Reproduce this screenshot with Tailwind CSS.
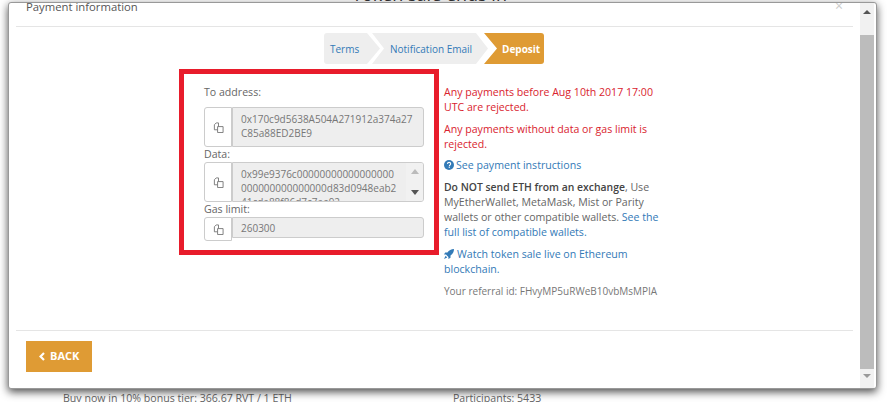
<!DOCTYPE html>
<html lang="en">
  <head>
    <meta charset="UTF-8" />
    <title>Payment information</title>
    <script src="https://cdn.jsdelivr.net/npm/@tailwindcss/browser@4"></script>
  </head>
  <body class="relative h-[402px] w-[887px] overflow-hidden bg-white font-['Open_Sans',sans-serif] text-[#666]">
    <!-- page behind the modal -->
    <div class="absolute left-[352px] top-[-18px] text-[18px] leading-[24px] text-[#333]">Token sale ends in</div>
    <div class="absolute left-[63px] top-[391px] text-[10.6px] leading-[15px] text-[#666]">Buy now in 10% bonus tier: 366.67 RVT / 1 ETH</div>
    <div class="absolute left-[453px] top-[391px] text-[10.6px] leading-[15px] text-[#666]">Participants: 5433</div>

    <!-- modal -->
    <div class="absolute left-[8px] top-[2px] flex h-[387px] w-[869px] rounded-[3px] border border-[#999] bg-white shadow-[0_3px_9px_rgba(0,0,0,0.7)]">
      <div class="flex w-[851px] flex-col overflow-hidden pl-[7px] pr-[6px]">
        <div class="relative h-[24px] shrink-0 border-b border-[#e5e5e5]">
          <h4 class="ml-[10px] mt-[-4px] text-[11.3px] leading-[15px] text-[#555]">Payment information</h4>
          <span class="absolute right-[10px] top-[-4px] text-[14px] leading-[14px] text-[#ccc]">×</span>
        </div>

        <!-- steps -->
        <div class="mt-[6px] flex h-[31px] shrink-0 pl-[308px] text-[10px] leading-[33px]">
          <div class="h-full w-[56px] rounded-l-[3px] bg-[#eee] pl-[6px] text-[#337ab7] [clip-path:polygon(0_0,43px_0,56px_50%,43px_100%,0_100%)]">Terms</div>
          <div class="ml-[-8px] h-full w-[116px] bg-[#eee] pl-[18px] text-[#337ab7] [clip-path:polygon(0_0,104px_0,116px_50%,104px_100%,0_100%,12px_50%)]">Notification Email</div>
          <div class="ml-[-4px] h-full w-[60px] rounded-r-[3px] bg-[#df9b34] pl-[18px] font-bold text-white [clip-path:polygon(0_0,100%_0,100%_100%,0_100%,13px_50%)]">Deposit</div>
        </div>

        <!-- body -->
        <div class="mt-[5px] flex h-[261px] shrink-0 items-start pl-[163px]">
          <div class="h-[186px] w-[260px] shrink-0 border-[5px] border-[#e81c2b] pl-[20px] pr-[10px] pt-[11px] text-[10.6px] text-[#666]">
            <div class="h-[15px] leading-[15px]">To address:</div>
            <div class="mt-[7px] flex h-[40px]">
              <div class="flex w-[28px] shrink-0 items-center justify-center rounded-l-[3px] border border-[#ccc] bg-white">
                <svg class="h-[11px] w-[11px]" viewBox="0 0 12 12" fill="none" stroke="#777" stroke-width="1"><path d="M5 5v6.500h6V5zM5 8.500H1.500V3l2-2h2.500v4"/></svg>
              </div>
              <div class="flex-1 rounded-r-[3px] border border-[#ccc] bg-[#eee] pb-[3px] pl-[8px] pr-[6px] pt-[4px] text-[10px] leading-[14px] text-[#777]">0x170c9d5638A504A271912a374a27<br />C85a88ED2BE9</div>
            </div>
            <div class="h-[15px] leading-[15px]">Data:</div>
            <div class="flex h-[40px]">
              <div class="flex w-[28px] shrink-0 items-center justify-center rounded-l-[3px] border border-[#ccc] bg-white">
                <svg class="h-[11px] w-[11px]" viewBox="0 0 12 12" fill="none" stroke="#777" stroke-width="1"><path d="M5 5v6.500h6V5zM5 8.500H1.500V3l2-2h2.500v4"/></svg>
              </div>
              <div class="flex min-w-0 flex-1 overflow-hidden rounded-r-[3px] border border-[#ccc] bg-[#eee]">
                <div class="flex-1 overflow-hidden pb-[3px] pl-[8px] pt-[4px] text-[10px] leading-[14px] text-[#777]">0x99e9376c00000000000000000<br />000000000000000d83d0948eab2<br />41cda88f86d7c7ae92</div>
                <div class="flex w-[17px] shrink-0 flex-col items-center justify-between bg-[#f1f1f1] pb-[6px] pt-[6px]">
                  <span class="h-0 w-0 border-x-[4px] border-b-[5px] border-x-transparent border-b-[#bbb]"></span>
                  <span class="h-0 w-0 border-x-[4px] border-t-[5px] border-x-transparent border-t-[#555]"></span>
                </div>
              </div>
            </div>
            <div class="h-[15px] leading-[15px]">Gas limit:</div>
            <div class="flex items-start">
              <div class="flex h-[24px] w-[28px] shrink-0 items-center justify-center rounded-l-[3px] border border-[#ccc] bg-white">
                <svg class="h-[11px] w-[11px]" viewBox="0 0 12 12" fill="none" stroke="#777" stroke-width="1"><path d="M5 5v6.500h6V5zM5 8.500H1.500V3l2-2h2.500v4"/></svg>
              </div>
              <div class="h-[21px] flex-1 rounded-r-[3px] border border-[#ccc] bg-[#eee] pl-[8px] text-[10px] leading-[20px] text-[#777]">260300</div>
            </div>
          </div>

          <div class="ml-[5px] w-[222px] pt-[16px] text-[10.6px] leading-[15px]">
            <p class="mb-[7px] text-[#d9232e]">Any payments before Aug 10th 2017 17:00 UTC are rejected.</p>
            <p class="mb-[6px] text-[#d9232e]">Any payments without data or gas limit is rejected.</p>
            <p class="mb-[7px] text-[#337ab7]"><svg class="mr-[2px] inline h-[10px] w-[10px] align-[-1px]" viewBox="0 0 10 10"><circle cx="5" cy="5" r="5" fill="#337ab7"/><path d="M3.400 3.900C3.500 2.900 4.200 2.400 5.100 2.400c1 0 1.600.6 1.600 1.400 0 1.200-1.300 1.200-1.300 2.100" fill="none" stroke="#fff" stroke-width="1.100"/><rect x="4.700" y="6.600" width="1.200" height="1.200" fill="#fff"/></svg>See payment instructions</p>
            <p class="mb-[7px]"><b class="text-[10.4px] font-semibold text-[#444]">Do NOT send ETH from an exchange</b>, Use MyEtherWallet, MetaMask, Mist or Parity wallets or other compatible wallets. <span class="text-[#337ab7]">See the full list of compatible wallets.</span></p>
            <p class="mb-[7px] text-[#337ab7]"><svg class="mr-[3px] inline h-[10px] w-[10px] align-[-1px]" viewBox="0 0 10 10" fill="#337ab7"><path d="M10 0C7.200 0 5 1.200 3.400 3.500H1.200L0 5.600h2L4.400 8v2l2.100-1.200V6.600C8.800 5 10 2.800 10 0z"/><path d="M1.600 6.800 0 10l3.200-1.600z"/></svg>Watch token sale live on Ethereum blockchain.</p>
            <p class="text-[10px] text-[#777]">Your referral id: FHvyMP5uRWeB10vbMsMPIA</p>
          </div>
        </div>

        <!-- footer -->
        <div class="shrink-0 border-t border-[#e5e5e5] pl-[10px] pt-[10px]">
          <div class="flex h-[31px] w-[66px] items-center gap-[5px] bg-[#df9b34] pl-[13px] text-[11px] font-bold text-white">
            <svg class="h-[9px] w-[6px]" viewBox="0 0 6 9" fill="none" stroke="#fff" stroke-width="2.200"><path d="M5 1 1.500 4.500 5 8"/></svg>
            BACK
          </div>
        </div>
      </div>

      <!-- modal scrollbar -->
      <div class="ml-[1px] mr-[2px] flex w-[14px] flex-col items-center bg-[#f1f1f1]">
        <div class="flex h-[32px] w-full shrink-0 justify-center pt-[7px]">
          <span class="h-0 w-0 border-x-[4px] border-b-[4px] border-x-transparent border-b-[#555]"></span>
        </div>
        <div class="h-[334px] w-full shrink-0 bg-[#bcbcbc]"></div>
        <div class="flex w-full flex-1 justify-center pt-[5px]">
          <span class="h-0 w-0 border-x-[4px] border-t-[4px] border-x-transparent border-t-[#999]"></span>
        </div>
      </div>
    </div>
  </body>
</html>
